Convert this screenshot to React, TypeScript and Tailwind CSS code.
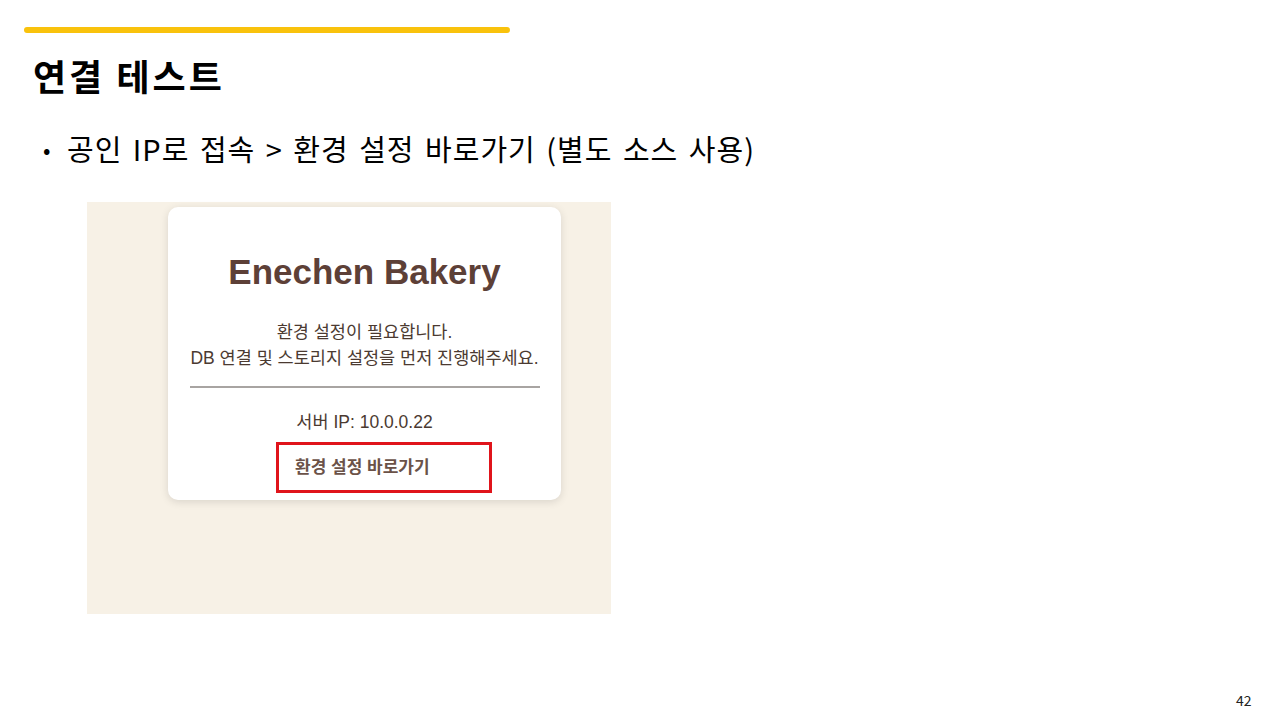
import React from "react";

export default function App() {
  return (
    <div
      className="relative w-[1280px] h-[720px] bg-white overflow-hidden"
      style={{ fontFamily: '"Noto Sans CJK KR", "Noto Sans", sans-serif' }}
    >
      <div className="pt-[27px] pl-[24px]">
        <div className="w-[486px] h-[6px] rounded-full bg-[#f9c20c]" />
      </div>
      <h1 className="ml-[33px] mt-[17px] text-[36px] leading-[50px] font-bold tracking-[3px] text-black">
        연결 테스트
      </h1>
      <div className="ml-[43px] mt-[28px] flex items-center text-[29px] leading-[40px] text-black">
        <span className="w-[24px] text-[22px]">•</span>
        <span className="tracking-[1px] [word-spacing:3px]">공인 IP로 접속 &gt; 환경 설정 바로가기 (별도 소스 사용)</span>
      </div>
      <div className="ml-[87px] mt-[34px] w-[524px] h-[412px] bg-[#f7f1e6] pt-[5px] pl-[81px]">
        <div
          className="w-[393px] h-[293px] bg-white rounded-[10px] shadow-[0_2px_8px_rgba(0,0,0,0.12)] flex flex-col items-center"
          style={{ fontFamily: '"Liberation Sans", "Noto Sans CJK KR", sans-serif' }}
        >
          <div className="mt-[44px] text-[35px] leading-[42px] font-bold text-[#5d4037]">
            Enechen Bakery
          </div>
          <div className="mt-[26px] text-[17.5px] leading-[26px] text-[#4b3a31] text-center">
            <div>환경 설정이 필요합니다.</div>
            <div>DB 연결 및 스토리지 설정을 먼저 진행해주세요.</div>
          </div>
          <div className="mt-[15px] w-[350px] h-[2px] bg-[#a8a4a2]" />
          <div className="mt-[22px] text-[17.5px] leading-[24px] text-[#4b3a31]">
            서버 IP: 10.0.0.22
          </div>
          <div className="mt-[8px] ml-[39px] w-[216px] h-[51px] border-[3px] border-[#e0141b] flex items-center pl-[16px]">
            <span className="text-[17px] font-bold text-[#6b5248]">환경 설정 바로가기</span>
          </div>
        </div>
      </div>
      <div className="absolute left-[1236px] top-[690px] text-[14px] text-[#222]">42</div>
    </div>
  );
}
